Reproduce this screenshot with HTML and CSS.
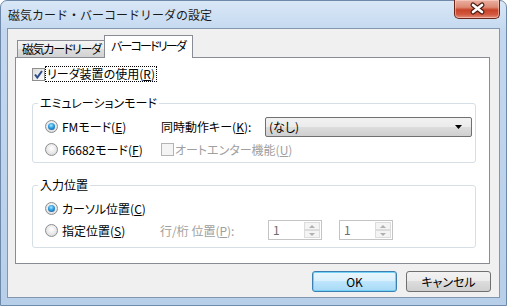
FILE: index.html
```html
<!DOCTYPE html>
<html lang="ja">
<head>
    <meta charset="UTF-8">
    <title>磁気カード・バーコードリーダの設定</title>
    <link rel="stylesheet" href="styles.css">
</head>
<body>

    <div class="window">

        <!-- Title bar -->
        <div class="titlebar">
            <span class="title">磁気カード・バーコードリーダの設定</span>
            <button class="close" type="button">
                <svg width="46" height="19" viewBox="0 0 46 19">
                    <path d="M19 6 L28 13 M28 6 L19 13" stroke="#4e1d13" stroke-width="5" stroke-linecap="round" fill="none"/>
                    <path d="M19 6 L28 13 M28 6 L19 13" stroke="#ffffff" stroke-width="2.6" stroke-linecap="round" fill="none"/>
                </svg>
            </button>
        </div>

        <div class="client">

            <!-- Tabs -->
            <div class="tabs">
                <div class="tab">磁気カードリーダ</div>
                <div class="tab active">バーコードリーダ</div>
            </div>

            <div class="panel">
                <div class="check-row">
                    <span class="checkbox">
                        <svg width="11" height="11" viewBox="0 0 11 11">
                            <path d="M2 5.5 L4.3 8.5 L9 2" stroke="#2c4c8c" stroke-width="2" fill="none"/>
                        </svg>
                    </span>
                    <span class="focus">リーダ装置の使用(<u>R</u>)</span>
                </div>

                <!-- Emulation mode -->
                <fieldset class="group emu">
                    <legend>エミュレーションモード</legend>
                    <div class="row">
                        <span class="opt"><span class="radio on"></span><span>FMモード(<u>E</u>)</span></span>
                        <span class="key-label">同時動作キー(<u>K</u>):</span>
                        <div class="combo">
                            <span>(なし)</span>
                            <svg width="7" height="4" viewBox="0 0 7 4"><polygon points="0,0 7,0 3.5,4" fill="#000"/></svg>
                        </div>
                    </div>
                    <div class="row">
                        <span class="opt"><span class="radio"></span><span>F6682モード(<u>F</u>)</span></span>
                        <span class="checkbox disabled"></span>
                        <span class="muted">オートエンター機能(<u>U</u>)</span>
                    </div>
                </fieldset>

                <!-- Input position -->
                <fieldset class="group pos">
                    <legend>入力位置</legend>
                    <div class="row">
                        <span class="opt"><span class="radio on"></span><span>カーソル位置(<u>C</u>)</span></span>
                    </div>
                    <div class="row">
                        <span class="opt short"><span class="radio"></span><span>指定位置(<u>S</u>)</span></span>
                        <span class="muted pos-label">行/桁 位置(<u>P</u>):</span>
                        <div class="spin">
                            <span class="val">1</span>
                            <span class="spin-btns"><span class="sb up"></span><span class="sb down"></span></span>
                        </div>
                        <div class="spin">
                            <span class="val">1</span>
                            <span class="spin-btns"><span class="sb up"></span><span class="sb down"></span></span>
                        </div>
                    </div>
                </fieldset>
            </div>

            <!-- Dialog buttons -->
            <div class="footer">
                <button class="btn default" type="button">OK</button>
                <button class="btn" type="button">キャンセル</button>
            </div>
        </div>
    </div>

</body>
</html>
```

FILE: styles.css
```css
body {
    margin: 0;
    font-family: "Noto Sans CJK JP", "Noto Sans", sans-serif;
    font-size: 12px;
    font-feature-settings: "palt";
    color: #000;
}

/* Window frame */
.window {
    width: 507px;
    height: 306px;
    box-sizing: border-box;
    border: 1px solid #6f89aa;
    border-radius: 7px 7px 0 0;
    background: linear-gradient(#d9e7f7, #c3d8ef 30px, #b8cfea);
    padding: 0 6px;
}

.titlebar {
    height: 27px;
    display: flex;
    justify-content: space-between;
    align-items: flex-start;
}

.title {
    padding: 6px 0 0 1px;
    line-height: 15px;
    color: #1a1a1a;
    font-feature-settings: normal;
}

.close {
    width: 46px;
    height: 19px;
    margin-top: -1px;
    padding: 0;
    border: 1px solid #6b2418;
    border-top: none;
    border-radius: 0 0 5px 5px;
    background: linear-gradient(#eab0a2, #dd8a74 40%, #c8432a 55%, #d2583e 80%, #e2907a);
    box-shadow: inset 0 0 0 1px rgba(255, 220, 210, 0.5);
}

.close svg {
    display: block;
    margin: -1px 0 0 -1px;
}

/* Client area */
.client {
    height: 270px;
    box-sizing: border-box;
    border: 1px solid #8296af;
    background: #f0f0f0;
    padding: 6px 9px 0 7px;
}

/* Tabs */
.tabs {
    height: 22px;
    display: flex;
    align-items: flex-end;
    padding-left: 2px;
}

.tab {
    width: 89px;
    height: 17px;
    box-sizing: border-box;
    border: 1px solid #898c95;
    border-bottom: none;
    background: linear-gradient(#f3f3f3, #ebebeb 50%, #dedede 50%, #d2d2d2);
    padding-left: 4px;
    line-height: 15px;
    letter-spacing: -1.3px;
    white-space: nowrap;
    overflow: hidden;
}

.tab.active {
    position: relative;
    z-index: 1;
    height: 23px;
    margin-left: -2px;
    margin-bottom: -1px;
    background: #fff;
    padding-left: 6px;
    line-height: 19px;
    letter-spacing: -1.8px;
}

.panel {
    height: 207px;
    box-sizing: border-box;
    border: 1px solid #898c95;
    background: #fff;
    padding: 8px 13px 0 16px;
}

/* Checkboxes */
.check-row {
    display: flex;
    align-items: center;
    height: 16px;
}

.checkbox {
    width: 13px;
    height: 13px;
    box-sizing: border-box;
    border: 1px solid #8f8f8f;
    background: linear-gradient(135deg, #dcdcdc, #fbfbfb);
    flex: none;
}

.checkbox svg {
    display: block;
}

.checkbox.disabled {
    border-color: #b4b4b4;
    background: #f4f4f4;
    margin-right: 1px;
}

.focus {
    border: 1px dotted #000;
    padding: 0 1px;
    line-height: 14px;
}

/* Group boxes */
.group {
    margin: 13px 0 0;
    padding: 4px 0 1px;
    border: 1px solid #d5dfe5;
    border-radius: 3px;
    min-width: 0;
}

.group legend {
    margin-left: 5px;
    padding: 0 2px;
    line-height: 16px;
}

.group.pos {
    margin-top: 14px;
    padding-bottom: 6px;
}

.row {
    display: flex;
    align-items: center;
    height: 23px;
    padding-left: 12px;
}

.pos .row {
    height: 22px;
}

.opt {
    width: 116px;
    display: flex;
    align-items: center;
    gap: 4px;
    white-space: nowrap;
}

.opt.short {
    width: 115px;
}

.radio {
    width: 13px;
    height: 13px;
    box-sizing: border-box;
    border: 1px solid #8b8d8f;
    border-radius: 50%;
    background: radial-gradient(circle at 50% 40%, #ffffff, #e8e8e8 55%, #cfcfcf);
    display: flex;
    align-items: center;
    justify-content: center;
    flex: none;
}

.radio.on::after {
    content: "";
    width: 7px;
    height: 7px;
    border-radius: 50%;
    background: radial-gradient(circle at 45% 35%, #a6e8ff, #2a9be0 45%, #0b4a86);
}

.key-label {
    width: 104px;
    white-space: nowrap;
}

.muted {
    color: #a0a0a0;
    white-space: nowrap;
}

.pos-label {
    width: 108px;
}

/* Combo box */
.combo {
    flex: 1;
    height: 20px;
    margin-right: 3px;
    box-sizing: border-box;
    border: 1px solid #707070;
    border-radius: 2px;
    background: linear-gradient(#f2f2f2, #ebebeb 50%, #dddddd 50%, #cfcfcf);
    display: flex;
    align-items: center;
    justify-content: space-between;
    padding: 0 9px 0 3px;
}

.combo svg {
    display: block;
}

/* Spinners (disabled) */
.spin {
    width: 54px;
    height: 20px;
    box-sizing: border-box;
    border: 1px solid #c4c4c4;
    background: #fff;
    display: flex;
    margin-right: 17px;
}

.spin .val {
    flex: 1;
    padding-left: 4px;
    line-height: 18px;
    color: #6d6d6d;
}

.spin-btns {
    width: 16px;
    display: flex;
    flex-direction: column;
    padding: 1px 1px 1px 0;
}

.sb {
    flex: 1;
    border: 1px solid #dcdcdc;
    background: #f4f4f4;
    display: flex;
    align-items: center;
    justify-content: center;
}

.sb.up::after {
    content: "";
    border-left: 3px solid transparent;
    border-right: 3px solid transparent;
    border-bottom: 3px solid #b0b0b0;
}

.sb.down::after {
    content: "";
    border-left: 3px solid transparent;
    border-right: 3px solid transparent;
    border-top: 3px solid #b0b0b0;
}

/* Dialog buttons */
.footer {
    display: flex;
    justify-content: flex-end;
    gap: 9px;
    margin: 7px -1px 0 0;
}

.btn {
    width: 85px;
    height: 21px;
    box-sizing: border-box;
    border: 1px solid #707070;
    border-radius: 3px;
    background: linear-gradient(#f2f2f2, #ebebeb 50%, #dddddd 50%, #cfcfcf);
    font: inherit;
    padding: 0;
    line-height: 19px;
    color: #000;
}

.btn.default {
    border-color: #3c7fb1;
    background: linear-gradient(#eaf6fd, #d9f0fc 50%, #bee6fd 50%, #a7d9f5);
    box-shadow: inset 0 0 0 1px #73d2f5;
}
```
